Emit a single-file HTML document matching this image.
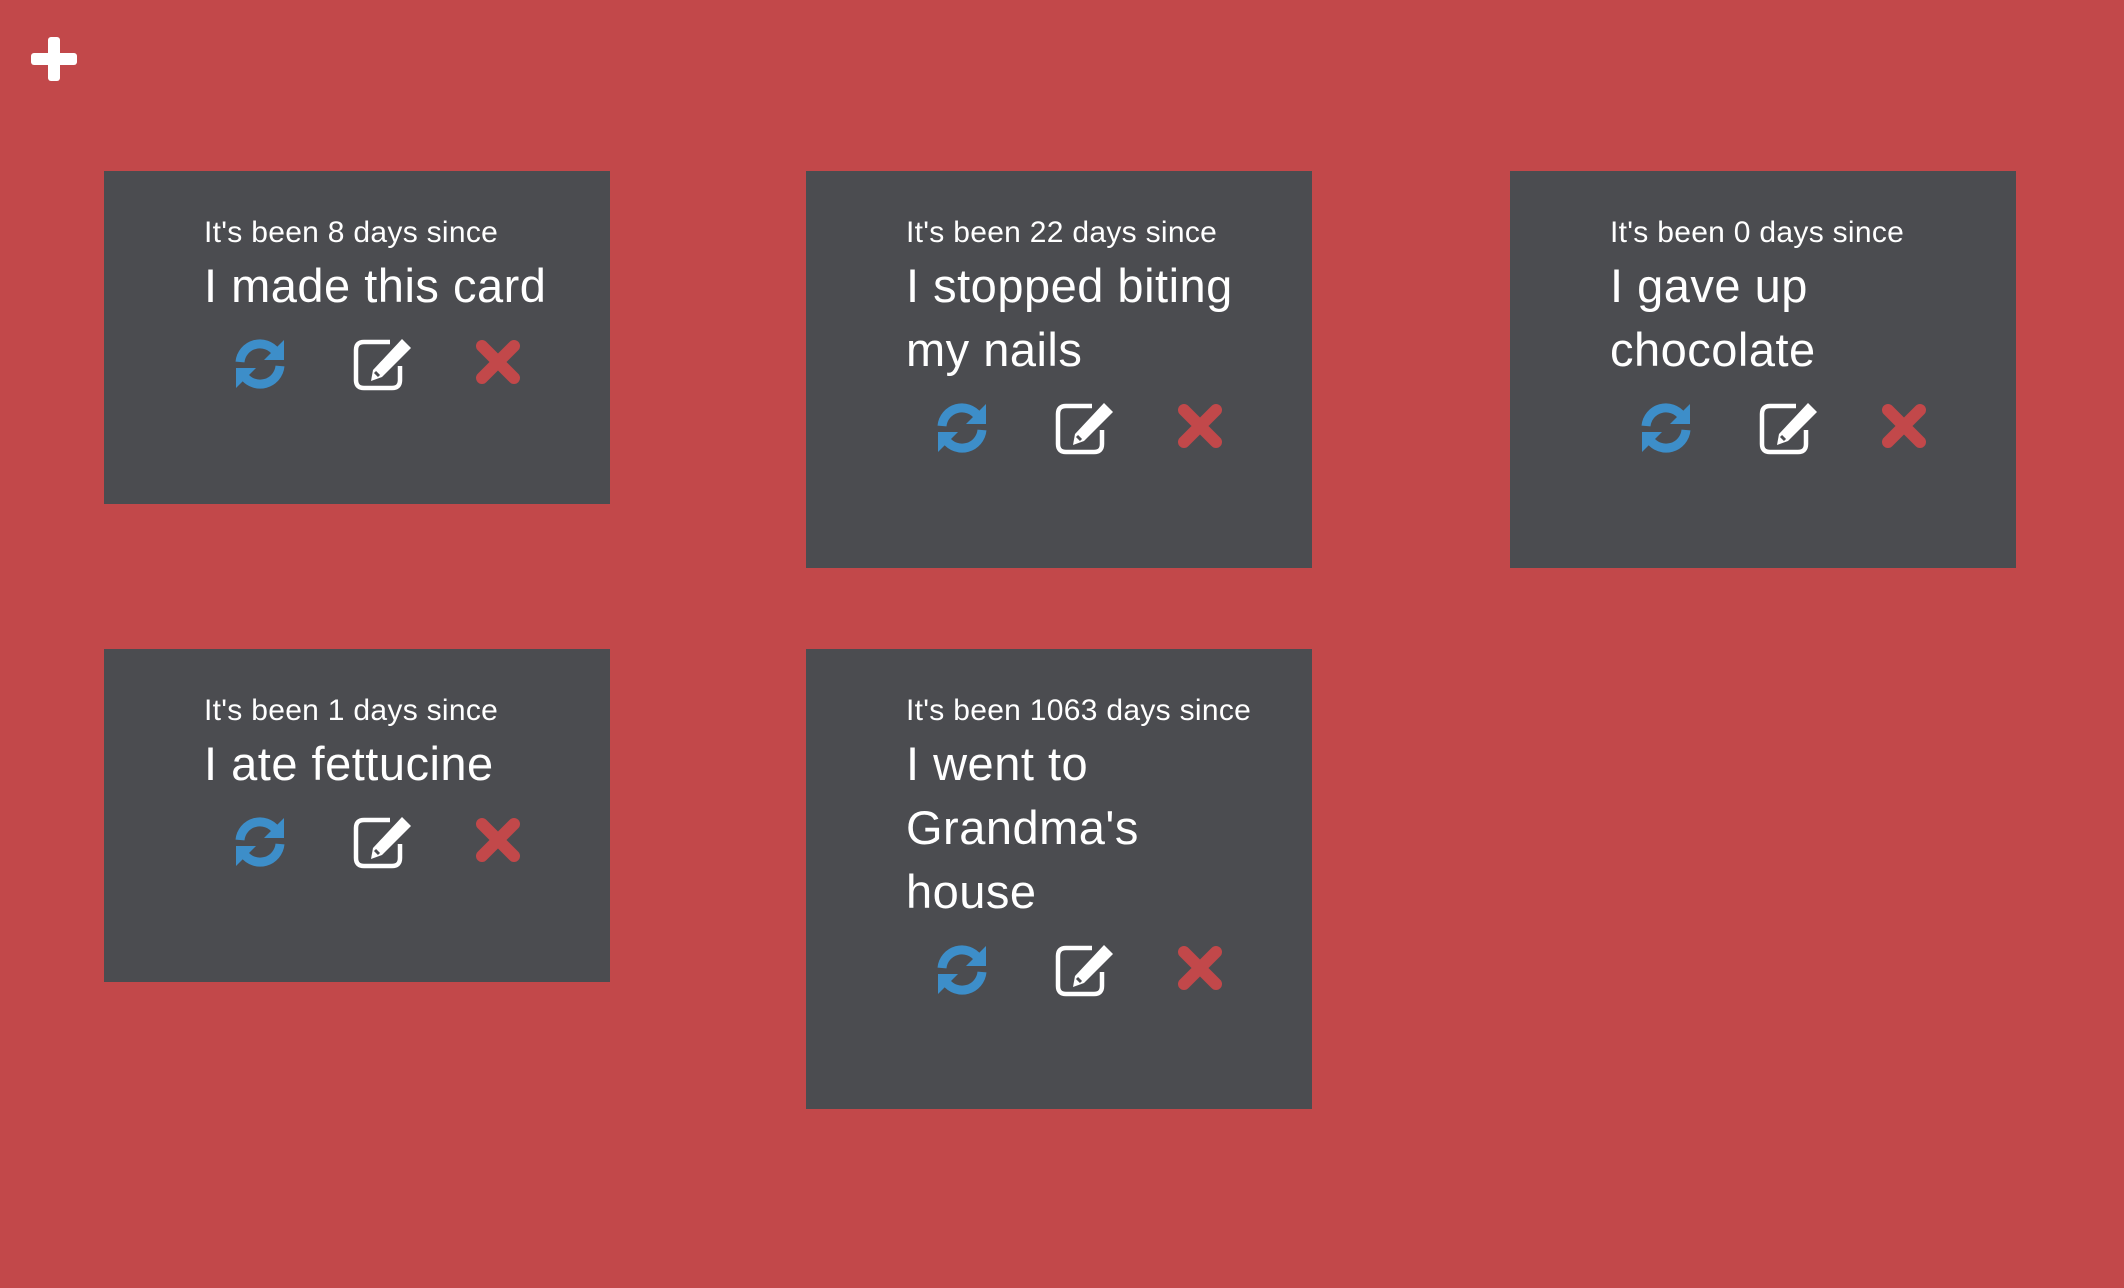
<!DOCTYPE html>
<html><head><meta charset="utf-8"><style>
body{margin:0;width:2124px;height:1288px;background:#c2484a;position:relative;overflow:hidden;font-family:"Liberation Sans",sans-serif;color:#fff}
.card{position:absolute;width:506px;background:#4b4c50}
.s{position:absolute;left:100px;top:44px;font-size:30px;line-height:36px;letter-spacing:0.3px;white-space:nowrap}
.t{position:absolute;left:100px;top:83px;font-size:47px;line-height:64px;letter-spacing:0.5px;white-space:nowrap}
.ic{position:absolute;left:0;width:506px;height:56px}
.ic svg{position:absolute;top:0}
</style></head><body>
<svg style="position:absolute;left:31px;top:37px" width="46" height="44" viewBox="0 0 46 44"><rect x="17" y="0" width="12" height="44" rx="3" fill="#fff"/><rect x="0" y="16" width="46" height="12" rx="3" fill="#fff"/></svg>

<div class="card" style="left:104px;top:171px;height:333px"><div class="s">It's been 8 days since</div><div class="t">I made this card</div><div class="ic" style="top:165px">ICONS</div></div>
<div class="card" style="left:806px;top:171px;height:397px"><div class="s">It's been 22 days since</div><div class="t">I stopped biting<br>my nails</div><div class="ic" style="top:229px">ICONS</div></div>
<div class="card" style="left:1510px;top:171px;height:397px"><div class="s">It's been 0 days since</div><div class="t">I gave up<br>chocolate</div><div class="ic" style="top:229px">ICONS</div></div>
<div class="card" style="left:104px;top:649px;height:333px"><div class="s">It's been 1 days since</div><div class="t">I ate fettucine</div><div class="ic" style="top:165px">ICONS</div></div>
<div class="card" style="left:806px;top:649px;height:460px"><div class="s">It's been 1063 days since</div><div class="t">I went to<br>Grandma's<br>house</div><div class="ic" style="top:293px">ICONS</div></div>

<script>
var icons='<svg style="left:128px" width="56" height="56" viewBox="0 0 56 56"><path d="M8 26 A20 20 0 0 1 44 16" fill="none" stroke="#3d8ec9" stroke-width="9"/><path d="M52 4 L52 24 L32 24 Z" fill="#3d8ec9"/><path d="M48 30 A20 20 0 0 1 12 40" fill="none" stroke="#3d8ec9" stroke-width="9"/><path d="M4 52 L4 32 L24 32 Z" fill="#3d8ec9"/></svg>'+
'<svg style="left:246px" width="66" height="56" viewBox="0 0 66 56"><path d="M40 6 H14 Q6 6 6 14 V44 Q6 52 14 52 H42 Q50 52 50 44 V30" fill="none" stroke="#fff" stroke-width="4.5"/><path d="M52 3 L61 12 L32 41 L21 45 L23 34 Z" fill="#fff"/><path d="M25 36 L29 40" stroke="#4b4c50" stroke-width="3"/></svg>'+
'<svg style="left:368px" width="52" height="52" viewBox="0 0 52 52"><path d="M10 10 L42 42 M42 10 L10 42" stroke="#c2484a" stroke-width="12" stroke-linecap="round"/></svg>';
document.querySelectorAll('.ic').forEach(function(e){e.innerHTML=icons;});
</script>
</body></html>
